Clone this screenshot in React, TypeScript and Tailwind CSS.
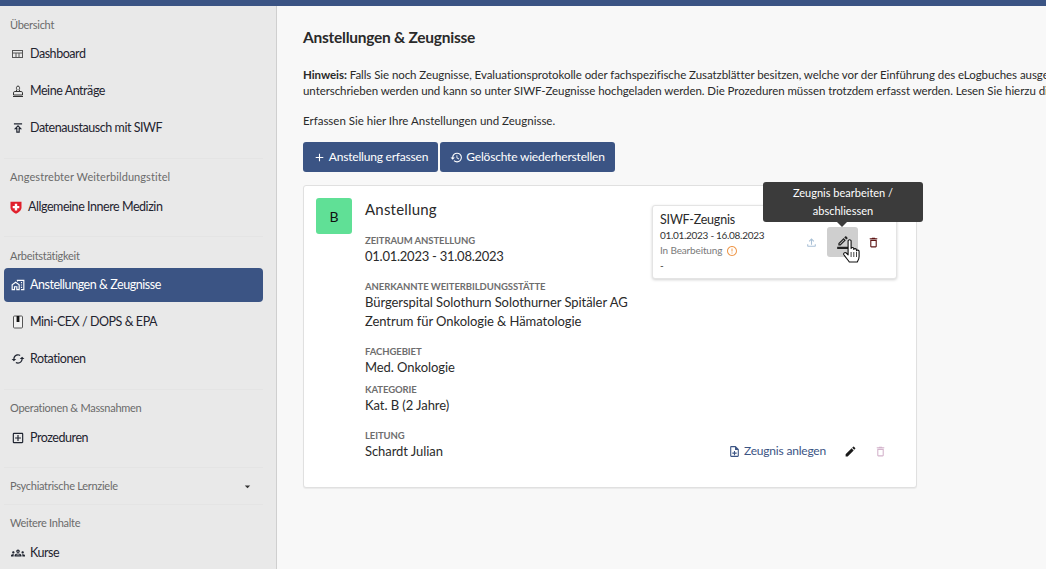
import type { ReactNode } from "react";
import {
  MdAdd,
  MdArrowDropDown,
  MdEdit,
  MdErrorOutline,
  MdOutlineAddBox,
  MdOutlineBorderColor,
  MdOutlineCached,
  MdOutlineDelete,
  MdOutlineFileUpload,
  MdOutlineGroups,
  MdOutlineMapsHomeWork,
  MdOutlineNoteAdd,
  MdOutlinePublish,
  MdOutlineRestore,
} from "react-icons/md";

function SectionLabel({ children, className }: { children: ReactNode; className?: string }) {
  return (
    <div className={"h-[18px] pl-[6px] text-[11px] leading-[18px] text-[#6b6b6b] " + (className ?? "tracking-[-0.28px]")}>
      {children}
    </div>
  );
}

function NavItem({ icon, label, active }: { icon: ReactNode; label: string; active?: boolean }) {
  return (
    <div
      className={
        "flex h-[34px] items-center rounded-[4px] pl-[7px] text-[12.5px] tracking-[-0.45px] " +
        (active ? "bg-[#3b5484] text-white" : "text-[#1f2430]")
      }
    >
      <span className="flex w-[19px] items-center justify-start text-[14px]">{icon}</span>
      <span className="pt-[1px]">{label}</span>
    </div>
  );
}

function Divider() {
  return <div className="h-px bg-[#e4e4e4]" />;
}

function DashboardIcon() {
  return (
    <svg width="14" height="14" viewBox="0 0 14 14" fill="none" stroke="#555" strokeWidth="1">
      <rect x="1.5" y="3.5" width="10" height="7" />
      <path d="M1.5 6 H11.5 M5 6 V10.5 M8 6 V10.5" />
    </svg>
  );
}

function StampIcon() {
  return (
    <svg width="14" height="14" viewBox="0 0 14 14" fill="none" stroke="#333" strokeWidth="1">
      <path d="M5.2 7.5 L5.9 5.6 C5 4.6 5.3 2 7 2 C8.7 2 9 4.6 8.1 5.6 L8.8 7.5" />
      <path d="M2.5 11 V8.8 C2.5 8 3 7.5 3.8 7.5 H10.2 C11 7.5 11.5 8 11.5 8.8 V11 Z" />
      <path d="M2 12.5 H12" />
    </svg>
  );
}

function NotebookIcon() {
  return (
    <svg width="14" height="14" viewBox="0 0 14 14">
      <rect x="2.5" y="1" width="9" height="12" rx="1" fill="#f2f2f2" stroke="#555" strokeWidth="1" />
      <rect x="5.6" y="1" width="2.8" height="6" fill="#111" />
    </svg>
  );
}

function SwissFlag() {
  return (
    <svg width="12" height="13" viewBox="0 0 12 13" className="ml-[-1px]">
      <path d="M0.5 0.8 H11.5 V6.5 C11.5 9.5 8.5 11.5 6 12.8 C3.5 11.5 0.5 9.5 0.5 6.5 Z" fill="#e0202c" />
      <path d="M4.8 2.8 H7.2 V4.9 H9.3 V7.2 H7.2 V9.4 H4.8 V7.2 H2.7 V4.9 H4.8 Z" fill="#fff" />
    </svg>
  );
}

function Sidebar() {
  return (
    <aside className="h-[563px] w-[277px] shrink-0 overflow-hidden border-r border-[#cfcfcf] bg-[#e9e9e9] pr-[13px] pl-[4px]">
      <div className="pt-[10px]">
        <SectionLabel>Übersicht</SectionLabel>
        <div className="mt-[3px] flex flex-col gap-[3px]">
          <NavItem icon={<DashboardIcon />} label="Dashboard" />
          <NavItem icon={<StampIcon />} label="Meine Anträge" />
          <NavItem icon={<MdOutlinePublish />} label="Datenaustausch mit SIWF" />
        </div>
      </div>
      <div className="mt-[13px]">
        <Divider />
      </div>
      <div className="pt-[9px]">
        <SectionLabel className="tracking-[0.08px]">Angestrebter Weiterbildungstitel</SectionLabel>
        <div className="mt-[4px]">
          <div className="flex h-[34px] items-center pl-[7px] text-[12.5px] tracking-[-0.45px] text-[#1f2430]">
            <span className="w-[17px]">
              <SwissFlag />
            </span>
            <span className="pt-[1px]">Allgemeine Innere Medizin</span>
          </div>
        </div>
      </div>
      <div className="mt-[12px]">
        <Divider />
      </div>
      <div className="pt-[10px]">
        <SectionLabel>Arbeitstätigkeit</SectionLabel>
        <div className="mt-[3px] flex flex-col gap-[3px]">
          <NavItem icon={<MdOutlineMapsHomeWork />} label="Anstellungen & Zeugnisse" active />
          <NavItem icon={<NotebookIcon />} label="Mini-CEX / DOPS & EPA" />
          <NavItem icon={<MdOutlineCached />} label="Rotationen" />
        </div>
      </div>
      <div className="mt-[13px]">
        <Divider />
      </div>
      <div className="pt-[9px]">
        <SectionLabel>Operationen & Massnahmen</SectionLabel>
        <div className="mt-[4px]">
          <NavItem icon={<MdOutlineAddBox />} label="Prozeduren" />
        </div>
      </div>
      <div className="mt-[12px]">
        <Divider />
      </div>
      <div className="flex h-[36px] items-center justify-between pr-[9px] pl-[6px] text-[11px] tracking-[-0.28px] text-[#6b6b6b]">
        <span>Psychiatrische Lernziele</span>
        <MdArrowDropDown className="text-[13px] text-[#333]" />
      </div>
      <Divider />
      <div className="pt-[9px]">
        <SectionLabel>Weitere Inhalte</SectionLabel>
        <div className="mt-[4px]">
          <NavItem icon={<MdOutlineGroups />} label="Kurse" />
        </div>
      </div>
    </aside>
  );
}

function Field({
  label,
  lines,
  className,
  valueClass,
}: {
  label: string;
  lines: string[];
  className?: string;
  valueClass?: string;
}) {
  return (
    <div className={className}>
      <div className="text-[9.5px] leading-[13px] font-bold tracking-[-0.08px] text-[#6e6e6e]">{label}</div>
      {lines.map((line) => (
        <div key={line} className={"text-[13px] leading-[19px] text-[#2a2a2a] " + (valueClass ?? "tracking-[-0.06px]")}>
          {line}
        </div>
      ))}
    </div>
  );
}

function HandCursor() {
  return (
    <svg width="19" height="24" viewBox="0 0 18 24" className="absolute top-[12px] left-[15px]">
      <path
        d="M5.6 2 C5.6 0.4 8.6 0.4 8.6 2 V9.5 C8.6 8.2 11.3 8.2 11.3 9.8 V10.5 C11.3 9.3 14 9.3 14 11 V11.8 C14 10.8 16.6 10.8 16.6 12.5 V17.5 C16.6 20 15.5 21.5 14.8 23 H6.8 C5.5 21 3.4 18.8 1.4 15.8 C0.5 14.3 2.4 12.7 3.8 14 L5.6 15.8 Z"
        fill="#fff"
        stroke="#111"
        strokeWidth="1.1"
        strokeLinejoin="round"
      />
      <path d="M8.6 13 V18 M11.3 13 V18 M14 13 V18" stroke="#111" strokeWidth="0.8" />
    </svg>
  );
}

function ZeugnisCard() {
  return (
    <div className="relative flex h-[74px] w-[245px] items-center justify-between rounded-[3px] border border-[#e4e4e4] bg-white pr-[16px] pl-[7px] shadow-[0_1px_3px_rgba(0,0,0,0.18)]">
      <div>
        <div className="text-[12.5px] leading-[18px] tracking-[-0.2px] text-[#2a2a2a]">SIWF-Zeugnis</div>
        <div className="text-[10px] leading-[13px] tracking-[-0.3px] text-[#333]">01.01.2023 - 16.08.2023</div>
        <div className="mt-[1px] flex items-center gap-[4px] text-[10px] leading-[15px] tracking-[-0.15px] text-[#7a7a7a]">
          In Bearbeitung
          <MdErrorOutline className="text-[12px] text-[#ef9a4e]" />
        </div>
        <div className="text-[10px] leading-[15px] text-[#333]">-</div>
      </div>
      <div className="flex items-center">
        <MdOutlineFileUpload className="mr-[9px] text-[13px] text-[#a9c0d6]" />
        <div className="relative flex h-[30px] w-[31px] items-center justify-center rounded-[3px] bg-[#cfcfcf]">
          <MdOutlineBorderColor className="text-[14px] text-[#222]" />
          <HandCursor />
          <div className="absolute top-[-5px] left-[10px] h-0 w-0 border-x-[5px] border-t-[5px] border-x-transparent border-t-[#3b3b3b]" />
        </div>
        <MdOutlineDelete className="ml-[9px] text-[13px] text-[#5c1414]" />
      </div>
      <div className="absolute top-[-24px] left-[110px] flex h-[40px] w-[160px] items-center justify-center rounded-[3px] bg-[#3b3b3b] px-[20px] text-center text-[11px] leading-[18px] text-white">
        Zeugnis bearbeiten / abschliessen
      </div>
    </div>
  );
}

function EmploymentCard() {
  return (
    <div className="flex h-[303px] w-[614px] rounded-[3px] border border-[#e0e0e0] bg-white pt-[12px] pr-[19px] pb-[27px] pl-[12px] shadow-[0_1px_1px_rgba(0,0,0,0.06)]">
      <div className="flex h-[36px] w-[36px] shrink-0 items-center justify-center rounded-[3px] bg-[#60e096] text-[14px] text-[#111]">
        B
      </div>
      <div className="ml-[13px] w-[287px] shrink-0">
        <div className="text-[15px] leading-[22px] tracking-[0.2px] text-[#2a2a2a]">Anstellung</div>
        <Field
          className="mt-[14px]"
          label="ZEITRAUM ANSTELLUNG"
          lines={["01.01.2023 - 31.08.2023"]}
          valueClass="tracking-[-0.25px]"
        />
        <Field
          className="mt-[14px]"
          label="ANERKANNTE WEITERBILDUNGSSTÄTTE"
          lines={["Bürgerspital Solothurn Solothurner Spitäler AG", "Zentrum für Onkologie & Hämatologie"]}
        />
        <Field className="mt-[14px]" label="FACHGEBIET" lines={["Med. Onkologie"]} />
        <Field className="mt-[6px]" label="KATEGORIE" lines={["Kat. B (2 Jahre)"]} />
        <Field className="mt-[14px]" label="LEITUNG" lines={["Schardt Julian"]} />
      </div>
      <div className="flex flex-1 flex-col items-end justify-between pt-[7px]">
        <ZeugnisCard />
        <div className="flex items-center text-[12px] tracking-[-0.2px] text-[#3b5484]">
          <MdOutlineNoteAdd className="mr-[3px] text-[13px]" />
          <span>Zeugnis anlegen</span>
          <MdEdit className="ml-[18px] text-[13px] text-[#1a1a1a]" />
          <MdOutlineDelete className="mr-[10px] ml-[17px] text-[13px] text-[#d4b4cc]" />
        </div>
      </div>
    </div>
  );
}

export default function App() {
  return (
    <div className="h-[569px] w-[1046px] overflow-hidden bg-[#f8f8f8] font-['Lato',sans-serif]">
      <div className="h-[6px] bg-[#3b5484]" />
      <div className="flex">
        <Sidebar />
        <main className="min-w-0 flex-1 overflow-hidden pt-[21px] pl-[26px]">
          <h1 className="text-[15.5px] leading-[21px] font-bold tracking-[-0.25px] text-[#2a2a2a]">
            Anstellungen & Zeugnisse
          </h1>
          <div className="mt-[19px] text-[11.5px] leading-[16px] tracking-[-0.06px] whitespace-nowrap text-[#2a2a2a]">
            <div>
              <b>Hinweis:</b> Falls Sie noch Zeugnisse, Evaluationsprotokolle oder fachspezifische Zusatzblätter
              besitzen, welche vor der Einführung des eLogbuches ausgestellt wurden
            </div>
            <div>
              unterschrieben werden und kann so unter SIWF-Zeugnisse hochgeladen werden. Die Prozeduren müssen trotzdem
              erfasst werden. Lesen Sie hierzu die Anleitung
            </div>
          </div>
          <p className="mt-[14px] text-[11.5px] leading-[16px] text-[#2a2a2a]">
            Erfassen Sie hier Ihre Anstellungen und Zeugnisse.
          </p>
          <div className="mt-[13px] flex gap-[2px]">
            <button className="flex h-[30px] w-[135px] items-center justify-center gap-[3px] rounded-[3px] bg-[#3b5484] text-[12px] tracking-[-0.2px] text-white">
              <MdAdd className="text-[13px]" />
              Anstellung erfassen
            </button>
            <button className="flex h-[30px] w-[175px] items-center justify-center gap-[3px] rounded-[3px] bg-[#3b5484] text-[12px] tracking-[-0.2px] text-white">
              <MdOutlineRestore className="text-[13px]" />
              Gelöschte wiederherstellen
            </button>
          </div>
          <div className="mt-[13px]">
            <EmploymentCard />
          </div>
        </main>
      </div>
    </div>
  );
}
